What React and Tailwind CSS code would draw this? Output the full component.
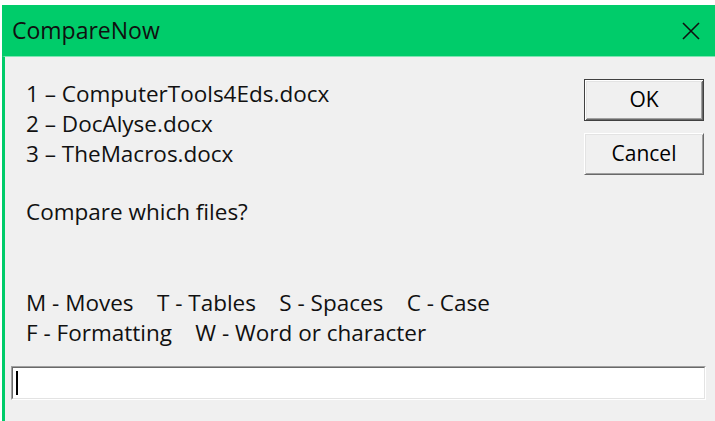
import React from "react";

const font = { fontFamily: '"Segoe UI", "Open Sans", "Noto Sans", sans-serif' };

function WinButton({ children, isDefault }) {
  return (
    <div
      className={
        "flex h-[42px] w-[120px] items-center justify-center bg-[#f0f0f0] text-[21px] text-black " +
        (isDefault
          ? "border border-[#404040] shadow-[inset_1px_1px_0_#ffffff,inset_-1px_-1px_0_#696969,inset_2px_2px_0_#e3e3e3,inset_-2px_-2px_0_#a0a0a0]"
          : "border border-t-white border-l-white border-r-[#696969] border-b-[#696969] shadow-[inset_1px_1px_0_#e3e3e3,inset_-1px_-1px_0_#a0a0a0]")
      }
    >
      {children}
    </div>
  );
}

export default function App() {
  return (
    <div className="h-[421px] w-[715px] overflow-hidden bg-white pl-[2px] pt-[5px]" style={font}>
      <div className="flex h-full flex-col">
        {/* title bar */}
        <div className="flex h-[51px] items-center justify-between bg-[#00cc6a] pl-[10px] pr-[12px]">
          <span className="text-[23px] text-[#101010]">CompareNow</span>
          <svg width="20" height="20" viewBox="0 0 20 20" className="mr-[2px]">
            <path d="M2 2 L18 18 M18 2 L2 18" stroke="#101010" strokeWidth="1.6" />
          </svg>
        </div>
        {/* body */}
        <div className="flex flex-1 flex-col border-l-[3px] border-t border-l-[#00cc6a] border-t-[#7fe5b4] bg-[#f0f0f0]">
          <div className="flex justify-between pl-[21px] pr-[11px] pt-[20px]">
            <div className="mt-[2px] flex flex-col text-[22.5px] leading-[30px] text-[#111]">
              <span>1 – ComputerTools4Eds.docx</span>
              <span>2 – DocAlyse.docx</span>
              <span>3 – TheMacros.docx</span>
              <span className="mt-[28px]">Compare which files?</span>
            </div>
            <div className="flex flex-col gap-[12px] pt-[2px]">
              <WinButton isDefault>OK</WinButton>
              <WinButton>Cancel</WinButton>
            </div>
          </div>
          <div className="mt-[61px] flex flex-col pl-[21px] text-[22.5px] leading-[30px] text-[#111]">
            <span className="whitespace-pre">M - Moves    T - Tables    S - Spaces    C - Case</span>
            <span className="whitespace-pre">F - Formatting    W - Word or character</span>
          </div>
          <div className="mt-[18px] ml-[6px] mr-[9px] h-[34px] border border-t-[#a0a0a0] border-l-[#a0a0a0] border-r-white border-b-white">
            <div className="flex h-full items-center border border-t-[#696969] border-l-[#696969] border-r-[#e3e3e3] border-b-[#e3e3e3] bg-white pl-[3px]">
              <div className="h-[24px] w-[2px] bg-black" />
            </div>
          </div>
        </div>
      </div>
    </div>
  );
}
